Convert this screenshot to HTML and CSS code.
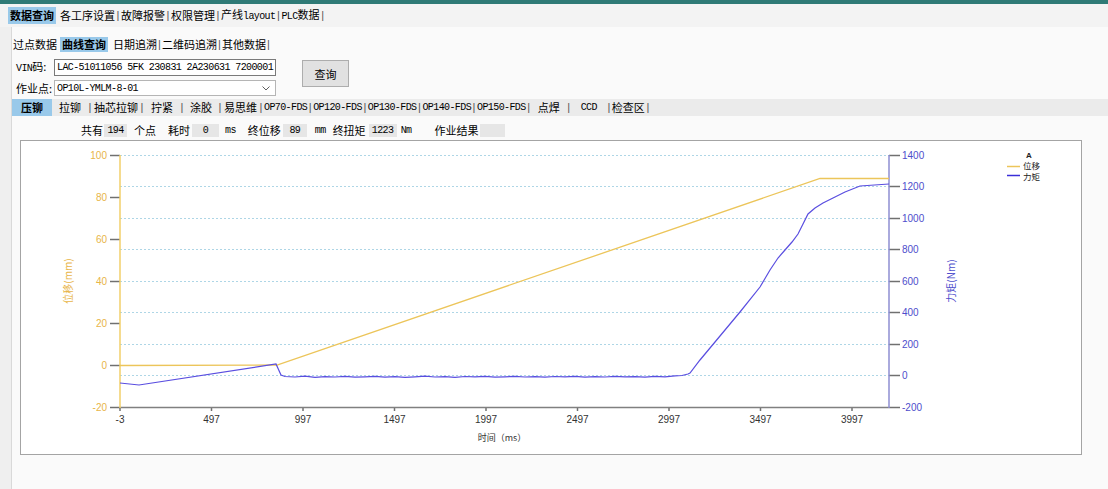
FILE: index.html
```html
<!DOCTYPE html>
<html>
<head>
<meta charset="utf-8">
<link rel="stylesheet" href="styles.css">
</head>
<body>
<div class="topbar"></div>
<div class="menubar">
  <span class="mi on">数据查询</span>
  <span class="mi gap">各工序设置</span><span class="sep">|</span>
  <span class="mi">故障报警</span><span class="sep">|</span>
  <span class="mi">权限管理</span><span class="sep">|</span>
  <span class="mi">产线<span class="en">layout</span></span><span class="sep">|</span>
  <span class="mi"><span class="en">PLC</span>数据</span><span class="sep">|</span>
</div>
<div class="main">
  <div class="side"></div>
  <div class="content">
    <div class="subtabs">
      <span class="st">过点数据</span>
      <span class="st on gapl">曲线查询</span>
      <span class="st gapr">日期追溯</span><span class="sep">|</span>
      <span class="st">二维码追溯</span><span class="sep">|</span>
      <span class="st">其他数据</span><span class="sep">|</span>
    </div>
    <div class="form">
      <div class="fields">
        <div class="frow"><span class="flbl"><span class="en">VIN</span>码:</span><div class="input en">LAC-51011056 5FK 230831 2A230631 7200001</div></div>
        <div class="frow"><span class="flbl">作业点:</span><div class="select"><span class="en">OP10L-YMLM-8-01</span><svg class="chev" width="8" height="5" viewBox="0 0 8 5"><polyline points="0.5,0.5 4,4 7.5,0.5" fill="none" stroke="#606060" stroke-width="1"/></svg></div></div>
      </div>
      <button class="btn">查询</button>
    </div>
    <div class="tabs">
      <span class="tab on p9">压铆</span>
      <span class="tab p7">拉铆</span><span class="sep">|</span>
      <span class="tab p2">抽芯拉铆</span><span class="sep">|</span>
      <span class="tab p7">拧紧</span><span class="sep">|</span>
      <span class="tab p6">涂胶</span><span class="sep">|</span>
      <span class="tab p2">易思维</span><span class="sep">|</span>
      <span class="tab p1 en">OP70-FDS</span><span class="sep">|</span>
      <span class="tab p1 en">OP120-FDS</span><span class="sep">|</span>
      <span class="tab p1 en">OP130-FDS</span><span class="sep">|</span>
      <span class="tab p1 en">OP140-FDS</span><span class="sep">|</span>
      <span class="tab p1 en">OP150-FDS</span><span class="sep">|</span>
      <span class="tab p7">点焊</span><span class="sep">|</span>
      <span class="tab p10 en">CCD</span><span class="sep">|</span>
      <span class="tab p1">检查区</span><span class="sep">|</span>
    </div>
    <div class="info">
      <span>共有</span>
      <span class="box b23 m1 en">194</span>
      <span class="m7">个点</span>
      <span class="m12">耗时</span>
      <span class="box b27 m2 en">0</span>
      <span class="m6 en">ms</span>
      <span class="m12">终位移</span>
      <span class="box b24 m2 en">89</span>
      <span class="m8 en">mm</span>
      <span class="m7">终扭矩</span>
      <span class="box b28 m3 en">1223</span>
      <span class="m4 en">Nm</span>
      <span class="m23">作业结果</span>
      <span class="box b25 m2"></span>
    </div>
    <div class="chart">
      <svg width="1060" height="313" viewBox="21 141 1060 313">
        <g stroke="#aed6e6" stroke-width="1" stroke-dasharray="2,2">
          <line x1="120" y1="155.5" x2="889" y2="155.5"/>
          <line x1="120" y1="186.5" x2="889" y2="186.5"/>
          <line x1="120" y1="218.5" x2="889" y2="218.5"/>
          <line x1="120" y1="249.5" x2="889" y2="249.5"/>
          <line x1="120" y1="281.5" x2="889" y2="281.5"/>
          <line x1="120" y1="312.5" x2="889" y2="312.5"/>
          <line x1="120" y1="344.5" x2="889" y2="344.5"/>
          <line x1="120" y1="375.5" x2="889" y2="375.5"/>
        </g>
        <g stroke="#707070" stroke-width="1.5">
          <line x1="110" y1="155.5" x2="120" y2="155.5"/>
          <line x1="110" y1="197.5" x2="120" y2="197.5"/>
          <line x1="110" y1="239.5" x2="120" y2="239.5"/>
          <line x1="110" y1="281.5" x2="120" y2="281.5"/>
          <line x1="110" y1="323.5" x2="120" y2="323.5"/>
          <line x1="110" y1="365.5" x2="120" y2="365.5"/>
          <line x1="110" y1="407.5" x2="120" y2="407.5"/>
          <line x1="889" y1="155.5" x2="900" y2="155.5"/>
          <line x1="889" y1="186.5" x2="900" y2="186.5"/>
          <line x1="889" y1="218.5" x2="900" y2="218.5"/>
          <line x1="889" y1="249.5" x2="900" y2="249.5"/>
          <line x1="889" y1="281.5" x2="900" y2="281.5"/>
          <line x1="889" y1="312.5" x2="900" y2="312.5"/>
          <line x1="889" y1="344.5" x2="900" y2="344.5"/>
          <line x1="889" y1="375.5" x2="900" y2="375.5"/>
          <line x1="889" y1="407.5" x2="900" y2="407.5"/>
          <line x1="120" y1="407.5" x2="120" y2="411"/>
          <line x1="211.5" y1="407.5" x2="211.5" y2="411"/>
          <line x1="303" y1="407.5" x2="303" y2="411"/>
          <line x1="394.5" y1="407.5" x2="394.5" y2="411"/>
          <line x1="486" y1="407.5" x2="486" y2="411"/>
          <line x1="577.5" y1="407.5" x2="577.5" y2="411"/>
          <line x1="669" y1="407.5" x2="669" y2="411"/>
          <line x1="760.5" y1="407.5" x2="760.5" y2="411"/>
          <line x1="852" y1="407.5" x2="852" y2="411"/>
        </g>
        <line x1="120" y1="407.5" x2="889" y2="407.5" stroke="#808080" stroke-width="1.5"/>
        <line x1="120" y1="155" x2="120" y2="408" stroke="#f2cf6a" stroke-width="1.5"/>
        <line x1="889" y1="155" x2="889" y2="408" stroke="#8e8ed2" stroke-width="1.5"/>
        <g class="lt" text-anchor="end">
          <text x="107" y="159">100</text>
          <text x="107" y="201">80</text>
          <text x="107" y="243">60</text>
          <text x="107" y="285">40</text>
          <text x="107" y="327">20</text>
          <text x="107" y="369">0</text>
          <text x="107" y="411">-20</text>
        </g>
        <g class="rt">
          <text x="902" y="159">1400</text>
          <text x="902" y="190">1200</text>
          <text x="902" y="222">1000</text>
          <text x="902" y="253">800</text>
          <text x="902" y="285">600</text>
          <text x="902" y="316">400</text>
          <text x="902" y="348">200</text>
          <text x="902" y="379">0</text>
          <text x="902" y="411">-200</text>
        </g>
        <g class="xt" text-anchor="middle">
          <text x="120" y="423">-3</text>
          <text x="211.5" y="423">497</text>
          <text x="303" y="423">997</text>
          <text x="394.5" y="423">1497</text>
          <text x="486" y="423">1997</text>
          <text x="577.5" y="423">2497</text>
          <text x="669" y="423">2997</text>
          <text x="760.5" y="423">3497</text>
          <text x="852" y="423">3997</text>
        </g>
        <text class="xtitle" x="502" y="441" text-anchor="middle">时间（ms）</text>
        <text class="ltitle" x="0" y="0" text-anchor="middle" transform="translate(72 281) rotate(-90)">位移(mm)</text>
        <text class="rtitle" x="0" y="0" text-anchor="middle" transform="translate(955 281) rotate(-90)">力矩(Nm)</text>
        <polyline fill="none" stroke="#ecc55a" stroke-width="1.3" points="120,365.5 277,365 820,178.5 889,178.5"/>
        <polyline fill="none" stroke="#5a4ee0" stroke-width="1.2" points="120,383 139,385 276,364 281,375 285,376.5 295,377 305,376.2 315,377.3 325,376.6 335,377 345,376.4 355,377.2 365,376.8 375,376.3 385,377.1 395,376.6 405,377.4 415,376.9 425,376.2 435,377 445,376.7 455,377.3 465,376.5 475,376.9 485,376.4 495,377.2 505,376.8 515,376.3 525,377 535,376.6 545,377.1 555,376.5 565,376.9 575,376.4 585,377.2 595,376.7 605,377 615,376.3 625,376.9 635,376.6 645,377.1 655,376.4 665,376.8 675,375.8 682,375.5 688,374 690,373 700,360 720,336 740,312 760,287 770,270 778,258 785,250 792,242 798,234 803,224 808,214 815,208 823,203 833,198 845,192 860,186 889,184"/>
        <text class="legA" x="1026" y="158">A</text>
        <line x1="1007" y1="166.5" x2="1020" y2="166.5" stroke="#ecc55a" stroke-width="1.5"/>
        <line x1="1007" y1="175.5" x2="1020" y2="175.5" stroke="#3a2ed8" stroke-width="1.5"/>
        <text class="leg" x="1023" y="168.5">位移</text>
        <text class="leg" x="1023" y="179.5">力矩</text>
      </svg>
    </div>
  </div>
</div>
</body>
</html>
```

FILE: styles.css
```css
* { box-sizing: border-box; }
html, body { margin: 0; }
body {
  width: 1108px;
  height: 489px;
  overflow: hidden;
  background: #fafafa;
  color: #000;
  font-family: "Noto Sans CJK SC", "Noto Sans", sans-serif;
  font-size: 11px;
  line-height: 15px;
}
.en {
  font-family: "Liberation Mono", monospace;
  font-size: 10px;
  letter-spacing: -0.6px;
}
.topbar { height: 4px; background: #2f7a76; }
.menubar {
  height: 23px;
  background: #f3f3f3;
  display: flex;
  align-items: center;
  padding-left: 8px;
}
.mi { line-height: 17px; padding: 0 1px; white-space: nowrap; }
.mi.on { padding: 0 2px; }
.mi.gap { margin-left: 3px; }
.on { background: #99c9ea; font-weight: 700; }
.sep { width: 4px; text-align: center; color: #555; font-family: "Liberation Sans", sans-serif; font-size: 11px; }

.main { display: flex; height: 462px; }
.side { width: 12px; background: #efefef; border-right: 1px solid #d9d9d9; }
.content { flex: 1; display: flex; flex-direction: column; padding-top: 10px; }

.subtabs { display: flex; align-items: center; height: 15px; padding-left: 1px; }
.subtabs .sep { width: 5px; }
.st { line-height: 15px; white-space: nowrap; }
.st.on { padding: 0 2px; }
.st.gapl { margin-left: 3px; }
.st.gapr { margin-left: 5px; }

.form { display: flex; margin-top: 7px; padding-left: 4px; }
.fields { display: flex; flex-direction: column; gap: 4px; }
.frow { display: flex; align-items: center; }
.flbl { width: 38px; white-space: nowrap; }
.input {
  width: 222px; height: 17px;
  border: 1px solid #7a7a7a;
  background: #fff;
  padding-left: 2px;
  line-height: 15px;
  white-space: nowrap;
  overflow: hidden;
}
.select {
  width: 222px; height: 16px;
  border: 1px solid #b5b5b5;
  background: #fff;
  padding-left: 2px;
  display: flex; align-items: center; justify-content: space-between;
  padding-right: 5px;
}
.chev { display: block; }
.btn {
  margin-left: 26px; margin-top: 1px;
  width: 47px; height: 27px;
  background: #e1e1e1;
  border: 1px solid #adadad;
  font-family: "Noto Sans CJK SC", sans-serif;
  font-size: 11px;
  padding: 0;
  color: #000;
}

.tabs {
  display: flex; align-items: center;
  margin-top: 3px;
  height: 17px;
  background: #ebebeb;
}
.tab { line-height: 17px; white-space: nowrap; display: inline-block; }
.p1 { padding: 0 1px; }
.p2 { padding: 0 2px; }
.p6 { padding: 0 6px; }
.p7 { padding: 0 7px; }
.p9 { padding: 0 9px; }
.p10 { padding: 0 10px; }

.info { display: flex; align-items: center; height: 13px; margin-top: 8px; padding-left: 69px; white-space: nowrap; }
.box { display: inline-block; height: 13px; line-height: 13px; background: #e6e6e6; text-align: center; }
.b23 { width: 23px; } .b24 { width: 24px; } .b25 { width: 25px; } .b27 { width: 27px; } .b28 { width: 28px; }
.m1 { margin-left: 1px; } .m2 { margin-left: 2px; } .m3 { margin-left: 3px; } .m4 { margin-left: 4px; }
.m6 { margin-left: 6px; } .m7 { margin-left: 7px; } .m8 { margin-left: 8px; } .m12 { margin-left: 12px; } .m23 { margin-left: 23px; }

.chart {
  margin-top: 3px; margin-left: 8px;
  width: 1062px; height: 315px;
  border: 1px solid #a4a4a4;
  background: #fff;
}
.chart svg { display: block; }
.lt { font-family: "Liberation Sans", sans-serif; font-size: 10px; fill: #e8b548; }
.rt { font-family: "Liberation Sans", sans-serif; font-size: 10px; fill: #4e4ecc; }
.xt { font-family: "Liberation Sans", sans-serif; font-size: 10px; fill: #333; }
.xtitle { font-family: "Noto Sans CJK SC", sans-serif; font-size: 9px; fill: #333; }
.ltitle { font-family: "Noto Sans CJK SC", sans-serif; font-size: 10px; fill: #e8b548; }
.rtitle { font-family: "Noto Sans CJK SC", sans-serif; font-size: 10px; fill: #4e4ecc; }
.legA { font-family: "Liberation Sans", sans-serif; font-size: 8px; font-weight: 700; fill: #222; }
.leg { font-family: "Noto Sans CJK SC", sans-serif; font-size: 8.5px; fill: #222; }
```
